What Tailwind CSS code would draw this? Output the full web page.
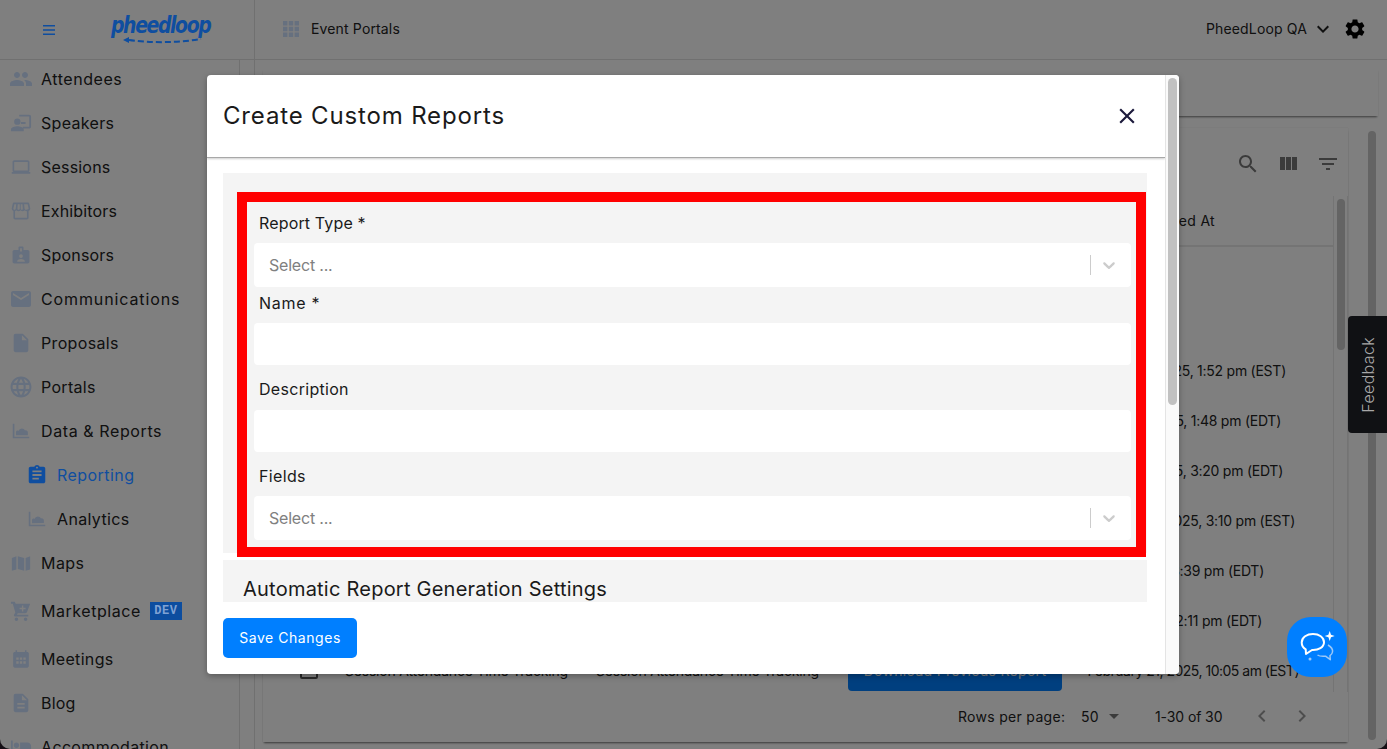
<!DOCTYPE html>
<html>
<head>
<meta charset="utf-8">
<script src="https://cdn.jsdelivr.net/npm/@tailwindcss/browser@4"></script>
<title>Create Custom Reports</title>
</head>
<body class="bg-[#2a1f2a]">
<div class="relative w-[1387px] h-[749px] overflow-hidden font-[Inter,sans-serif] text-[#222] text-[16px] tracking-[0.35px]">
  <div class="w-full h-full bg-white rounded-b-[10px] overflow-hidden flex flex-col">
    <!-- top bar -->
    <header class="h-[60px] flex border-b border-[#e0e0e0] shrink-0">
      <div class="w-[255px] border-r border-[#e0e0e0] flex items-center pl-[37px]">
        <svg class="relative z-10 w-6 h-6 text-[#0f4ea0]" viewBox="0 0 24 24" fill="currentColor"><path d="M6 7h12v1.600H6zM6 11.200h12v1.600H6zM6 15.400h12V17H6z"/></svg>
        <div class="relative z-10 ml-[50px] w-[104px] h-[40px] text-[#0f4ea0]">
          <span class="block w-[122px] scale-x-[0.82] origin-left font-['DejaVu_Sans',sans-serif] italic font-bold text-[23px] leading-[30px] tracking-[-1.7px] whitespace-nowrap">pheedloop</span>
          <svg class="absolute left-[12px] top-[26px] w-[84px] h-[12px]" viewBox="0 0 84 12" fill="none" stroke="currentColor" stroke-width="2"><path d="M6 4c22 3 48 3 72-1" stroke-dasharray="6 3"/><path d="M0 4l6-3v6z" fill="currentColor" stroke="none"/></svg>
        </div>
      </div>
      <div class="flex-1 flex items-center pl-[27px] pr-[20px] pb-[2px] text-[14px] tracking-[0.15px]">
        <svg class="w-[18px] h-[18px] text-[#cde0ff]" viewBox="0 0 18 18" fill="currentColor"><path d="M1 1h4.400v4.400H1zM6.800 1h4.400v4.400H6.800zM12.600 1H17v4.400h-4.400zM1 6.800h4.400v4.400H1zM6.800 6.800h4.400v4.400H6.800zM12.600 6.800H17v4.400h-4.400zM1 12.600h4.400V17H1zM6.800 12.600h4.400V17H6.800zM12.600 12.600H17V17h-4.400z"/></svg>
        <span class="ml-[11px]">Event Portals</span>
        <span class="ml-auto">PheedLoop QA</span>
        <svg class="w-6 h-6 ml-[4px]" viewBox="0 0 24 24" fill="currentColor"><path d="M7.410 8.590 12 13.170l4.590-4.580L18 10l-6 6-6-6z"/></svg>
        <svg class="w-6 h-6 ml-[8px] text-black" viewBox="0 0 24 24" fill="currentColor"><path d="M19.140 12.940c.04-.3.06-.61.06-.94 0-.32-.02-.64-.07-.94l2.030-1.580c.18-.14.23-.41.12-.61l-1.920-3.320c-.12-.22-.37-.29-.59-.22l-2.390.96c-.5-.38-1.030-.7-1.620-.94l-.36-2.540c-.04-.24-.24-.41-.48-.41h-3.840c-.24 0-.43.17-.47.41l-.36 2.540c-.59.24-1.130.57-1.620.94l-2.390-.96c-.22-.08-.47 0-.59.22L2.740 8.870c-.12.21-.08.47.12.61l2.030 1.580c-.05.3-.09.63-.09.94s.02.64.07.94l-2.030 1.580c-.18.14-.23.41-.12.61l1.920 3.320c.12.22.37.29.59.22l2.390-.96c.5.38 1.030.7 1.620.94l.36 2.54c.05.24.24.41.48.41h3.840c.24 0 .44-.17.47-.41l.36-2.54c.59-.24 1.130-.56 1.620-.94l2.390.96c.22.08.47 0 .59-.22l1.920-3.320c.12-.22.07-.47-.12-.61l-2.010-1.580zM12 15.600c-1.980 0-3.600-1.620-3.600-3.600s1.620-3.600 3.600-3.600 3.600 1.620 3.600 3.600-1.620 3.600-3.600 3.600z"/></svg>
      </div>
    </header>
    <div class="flex flex-1 min-h-0">
      <!-- sidebar -->
      <aside class="w-[240px] shrink-0 border-r border-[#e0e0e0] overflow-hidden">
        <div class="-mt-[3px]">
          <div class="h-11 flex items-center pl-[10px] gap-[9px]"><svg class="w-[22px] h-[22px] text-[#cde0ff]" viewBox="1 1 22 22" fill="currentColor"><path d="M16 11c1.660 0 2.990-1.340 2.990-3S17.660 5 16 5c-1.660 0-3 1.340-3 3s1.340 3 3 3zm-8 0c1.660 0 2.990-1.340 2.990-3S9.660 5 8 5C6.340 5 5 6.340 5 8s1.340 3 3 3zm0 2c-2.330 0-7 1.170-7 3.500V19h14v-2.500c0-2.330-4.670-3.500-7-3.500zm8 0c-.29 0-.62.02-.97.05 1.160.84 1.970 1.970 1.970 3.450V19h6v-2.500c0-2.330-4.670-3.500-7-3.500z"/></svg><span class="tracking-[0.55px]">Attendees</span></div>
          <div class="h-11 flex items-center pl-[10px] gap-[9px]"><svg class="w-[22px] h-[22px] text-[#cde0ff]" viewBox="0 0 24 24" fill="currentColor"><path d="M21 3H10v2h11v11h-7v2h7c1.100 0 2-.9 2-2V5c0-1.100-.9-2-2-2zM8 14a3.500 3.500 0 1 0 0-7 3.500 3.500 0 0 0 0 7zm0 1.500c-2.700 0-7 1.300-7 3.500V21h14v-2c0-2.200-4.300-3.500-7-3.500zM12 11h5v2h-5z"/></svg><span class="tracking-[0.33px]">Speakers</span></div>
          <div class="h-11 flex items-center pl-[10px] gap-[9px]"><svg class="w-[22px] h-[22px] text-[#cde0ff]" viewBox="-1 -1 26 26" fill="currentColor"><path d="M20 18c1.100 0 1.990-.9 1.990-2L22 6c0-1.100-.9-2-2-2H4c-1.100 0-2 .9-2 2v10c0 1.100.9 2 2 2H1v2h22v-2h-3zM4 6h16v10H4V6z"/></svg><span class="tracking-[0.2px]">Sessions</span></div>
          <div class="h-11 flex items-center pl-[10px] gap-[9px]"><svg class="w-[22px] h-[22px] text-[#cde0ff]" viewBox="-1 0 26 24" fill="currentColor"><path fill-rule="evenodd" d="M4 2h16c1.100 0 1.600.5 1.800 1.400L23 9c0 1.400-.7 2.400-2 2.900V20c0 1.100-.9 2-2 2H5c-1.100 0-2-.9-2-2v-8.100C1.700 11.400 1 10.400 1 9l1.200-5.600C2.400 2.500 2.900 2 4 2zm.2 2L3 9c0 1 .6 1.500 1.300 1.500S5.600 10 5.800 9l.5-5zm4 0-.4 5c0 .9.600 1.500 1.300 1.500.8 0 1.400-.6 1.400-1.500V4zm3.500 0v5c0 .9.500 1.500 1.300 1.500S14.200 9.900 14.100 9l-.4-5zm4 0 .5 5c.2 1 .8 1.500 1.500 1.500S21 10 21 9l-1.200-5zM5 12.200V20h14v-7.800c-1 0-1.900-.4-2.500-1.100-.7.700-1.500 1.100-2.500 1.100s-1.800-.4-2.500-1.100c-.7.700-1.500 1.100-2.500 1.100s-1.800-.4-2.500-1.100c-.6.700-1.500 1.100-2.500 1.100z"/></svg><span class="tracking-[0.15px]">Exhibitors</span></div>
          <div class="h-11 flex items-center pl-[10px] gap-[9px]"><svg class="w-[22px] h-[22px] text-[#cde0ff]" viewBox="-1 0 26 24" fill="currentColor"><path fill-rule="evenodd" d="M4 6h5V3c0-.6.400-1 1-1h4c.6 0 1 .4 1 1v3h5c1.100 0 2 .9 2 2v12c0 1.100-.9 2-2 2H4c-1.100 0-2-.9-2-2V8c0-1.100.9-2 2-2zm7-2v4h2V4zm1 7a2.200 2.200 0 1 0 0 4.400 2.200 2.200 0 0 0 0-4.400zm-4.500 9h9v-1c0-1.500-3-2.400-4.500-2.400s-4.500.9-4.500 2.400z"/></svg><span class="tracking-[0.2px]">Sponsors</span></div>
          <div class="h-11 flex items-center pl-[10px] gap-[9px]"><svg class="w-[22px] h-[22px] text-[#cde0ff]" viewBox="1 3 22 18" fill="currentColor"><path d="M20 4H4c-1.100 0-1.990.9-1.990 2L2 18c0 1.100.9 2 2 2h16c1.100 0 2-.9 2-2V6c0-1.100-.9-2-2-2zm0 4-8 5-8-5V6l8 5 8-5v2z"/></svg><span class="tracking-[0.88px]">Communications</span></div>
          <div class="h-11 flex items-center pl-[10px] gap-[9px]"><svg class="w-[22px] h-[22px] text-[#cde0ff]" viewBox="0 0 24 24" fill="currentColor"><path d="M6 2c-1.100 0-1.990.9-1.990 2L4 20c0 1.100.89 2 1.990 2H18c1.100 0 2-.9 2-2V8l-6-6H6zm7 7V3.500L18.500 9H13z"/></svg><span>Proposals</span></div>
          <div class="h-11 flex items-center pl-[10px] gap-[9px]"><svg class="w-[22px] h-[22px] text-[#cde0ff]" viewBox="1.500 1.500 21 21" fill="currentColor"><path d="M11.990 2C6.470 2 2 6.480 2 12s4.470 10 9.990 10C17.520 22 22 17.520 22 12S17.520 2 11.990 2zm6.930 6h-2.950c-.32-1.250-.78-2.450-1.380-3.560 1.840.63 3.370 1.910 4.330 3.560zM12 4.040c.83 1.200 1.480 2.530 1.910 3.960h-3.820c.43-1.430 1.080-2.760 1.910-3.960zM4.260 14C4.100 13.360 4 12.690 4 12s.1-1.360.26-2h3.380c-.08.66-.14 1.320-.14 2s.06 1.340.14 2H4.260zm.82 2h2.950c.32 1.250.78 2.450 1.380 3.560-1.840-.63-3.370-1.900-4.330-3.560zm2.950-8H5.080c.96-1.660 2.490-2.930 4.330-3.560C8.810 5.550 8.350 6.750 8.030 8zM12 19.960c-.83-1.200-1.480-2.530-1.910-3.960h3.820c-.43 1.430-1.080 2.760-1.910 3.960zM14.340 14H9.660c-.09-.66-.16-1.320-.16-2s.07-1.350.16-2h4.680c.09.65.16 1.320.16 2s-.07 1.340-.16 2zm.25 5.560c.6-1.110 1.060-2.310 1.380-3.560h2.950c-.96 1.650-2.490 2.930-4.330 3.560zM16.360 14c.08-.66.14-1.320.14-2s-.06-1.340-.14-2h3.380c.16.64.26 1.310.26 2s-.1 1.360-.26 2h-3.380z"/></svg><span class="tracking-[0.3px]">Portals</span></div>
          <div class="h-11 flex items-center pl-[10px] gap-[9px]"><svg class="w-[22px] h-[22px] text-[#cde0ff]" viewBox="0 0 24 24" fill="currentColor"><path d="M3 4h1.800v14.200H21V20H3zM6.500 16.500v-3.300c0-1 .8-1.700 1.700-1.700.4 0 .8.100 1.100.400.5-1.600 2-2.700 3.700-2.700 1.500 0 2.800.9 3.400 2.200.3-.1.600-.1.800-.1 1.400 0 2.300 1.100 2.300 2.400v2.800z"/></svg><span class="tracking-[0.6px]">Data &amp; Reports</span></div>
          <div class="h-11 flex items-center pl-[26px] gap-[9px]"><svg class="relative z-10 w-[22px] h-[22px] text-[#0f4ea0]" viewBox="0 0 24 24" fill="currentColor"><path d="M19 3h-4.180C14.400 1.840 13.300 1 12 1c-1.300 0-2.400.84-2.820 2H5c-1.100 0-2 .9-2 2v14c0 1.100.9 2 2 2h14c1.100 0 2-.9 2-2V5c0-1.100-.9-2-2-2zm-7 0c.55 0 1 .45 1 1s-.45 1-1 1-1-.45-1-1 .45-1 1-1zm2 14H7v-2h7v2zm3-4H7v-2h10v2zm0-4H7V7h10v2z"/></svg><span class="relative z-10 text-[#0f4ea0] tracking-[0.45px]">Reporting</span></div>
          <div class="h-11 flex items-center pl-[26px] gap-[9px]"><svg class="w-[22px] h-[22px] text-[#cde0ff]" viewBox="0 0 24 24" fill="currentColor"><path d="M3 4h1.800v14.200H21V20H3zM6.500 16.500v-3.300c0-1 .8-1.700 1.700-1.700.4 0 .8.100 1.100.400.5-1.600 2-2.700 3.700-2.700 1.500 0 2.800.9 3.400 2.200.3-.1.600-.1.800-.1 1.400 0 2.300 1.100 2.300 2.400v2.800z"/></svg><span>Analytics</span></div>
          <div class="h-11 flex items-center pl-[10px] gap-[9px]"><svg class="w-[22px] h-[22px] text-[#cde0ff]" viewBox="0 0 24 24" fill="currentColor"><path d="M2 6.500 7 4.500v14.500l-5 1.500zM8.500 4.500l7 2v14l-7-2zM17 6.500l5-2V19l-5 1.500z"/></svg><span class="tracking-[0.45px]">Maps</span></div>
          <div class="h-[52px] flex items-center pl-[10px] gap-[9px]"><svg class="w-[22px] h-[22px] text-[#cde0ff]" viewBox="0 0 24 24" fill="currentColor"><path fill-rule="evenodd" d="M1 2h4.300l.9 2H22l-3.400 9.200c-.3.800-1 1.300-1.800 1.300H8.500L7.600 16H20v2H5.500c-1 0-1.600-1.100-1.100-1.900L5.800 13.600 3 4H1zM13 6v2.500h-2.500V10H13v2.500h1.500V10H17V8.500h-2.500V6zM7 19a2 2 0 1 1 0 4 2 2 0 0 1 0-4zm10 0a2 2 0 1 1 0 4 2 2 0 0 1 0-4z"/></svg><span class="tracking-[0.55px]">Marketplace</span><span class="relative z-10 w-[32px] h-[18px] bg-[#0c4d9f] text-[#7fa2d4] font-['Liberation_Mono',monospace] font-bold text-[12px] leading-[18px] text-center tracking-[0.5px]">DEV</span></div>
          <div class="h-11 flex items-center pl-[10px] gap-[9px]"><svg class="w-[22px] h-[22px] text-[#cde0ff]" viewBox="-2 -1 28 26" fill="currentColor"><path fill-rule="evenodd" d="M20 3h-1V1h-2v2H7V1H5v2H4c-1.100 0-2 .9-2 2v16c0 1.100.9 2 2 2h16c1.100 0 2-.9 2-2V5c0-1.100-.9-2-2-2zM6 10h3v3H6zm4.500 0h3v3h-3zm4.500 0h3v3h-3zM6 15h3v3H6zm4.500 0h3v3h-3zm4.500 0h3v3h-3z"/></svg><span class="tracking-[0.33px]">Meetings</span></div>
          <div class="h-11 flex items-center pl-[10px] gap-[9px]"><svg class="w-[22px] h-[22px] text-[#cde0ff]" viewBox="0 0 24 24" fill="currentColor"><path d="M14 2H6c-1.100 0-1.990.9-1.990 2L4 20c0 1.100.89 2 1.990 2H18c1.100 0 2-.9 2-2V8l-6-6zm2 16H8v-2h8v2zm0-4H8v-2h8v2zm-3-5V3.500L18.500 9H13z"/></svg><span class="tracking-[0.2px]">Blog</span></div>
          <div class="h-11 flex items-center pl-[10px] gap-[9px]"><svg class="w-[22px] h-[22px] text-[#cde0ff]" viewBox="0 0 24 24" fill="currentColor"><path d="M7 13c1.660 0 3-1.340 3-3S8.660 7 7 7s-3 1.340-3 3 1.340 3 3 3zm12-6h-8v7H3V5H1v15h2v-3h18v3h2v-9c0-2.210-1.790-4-4-4z"/></svg><span>Accommodation</span></div>
        </div>
      </aside>
      <div class="w-[15px] shrink-0 border-r border-[#e0e0e0]"></div>
      <!-- page behind dialog -->
      <main class="flex-1 min-w-0 pl-2 pt-2">
        <div class="w-[1115px] h-[48px] bg-white shadow-[0_2px_2px_-1px_rgba(0,0,0,.55)]"></div>
        <div class="flex mt-3 h-[614px]">
          <section class="w-[1085px] h-full shadow-[0_2px_2px_-1px_rgba(0,0,0,.55),0_0_1px_rgba(0,0,0,.15)] flex flex-col text-[14px] tracking-[0.3px]">
            <div class="h-[68px] shrink-0 flex items-center justify-end pt-[3px] pr-[8px] gap-[16px] text-[#767676]">
              <svg class="w-6 h-6" viewBox="0 0 24 24" fill="currentColor"><path d="M15.500 14h-.79l-.28-.27C15.410 12.590 16 11.110 16 9.500 16 5.910 13.090 3 9.500 3S3 5.910 3 9.500 5.910 16 9.500 16c1.610 0 3.090-.59 4.230-1.570l.27.28v.79l5 4.990L20.490 19l-4.990-5zm-6 0C7.010 14 5 11.990 5 9.500S7.010 5 9.500 5 14 7.010 14 9.500 11.990 14 9.500 14z"/></svg>
              <svg class="w-6 h-6" viewBox="0 0 24 24" fill="currentColor"><path d="M10 18h5V5h-5v13zm-6 0h5V5H4v13zM16 5v13h5V5h-5z"/></svg>
              <svg class="w-6 h-6" viewBox="0 0 24 24" fill="currentColor"><path d="M10 18h4v-2h-4v2zM3 6v2h18V6H3zm3 7h12v-2H6v2z"/></svg>
            </div>
            <div class="flex h-[496px] shrink-0">
              <div class="flex-1 min-w-0">
                <div class="h-[51px] flex items-center justify-end pr-[118px] border-b-2 border-[#e8e8e8]">Updated At</div>
                <div class="pt-[98px] tracking-[-0.25px]">
                  <div class="h-[50px] flex items-center justify-end pr-[47px]">January 27, 2025, 1:52 pm (EST)</div>
                  <div class="h-[50px] flex items-center justify-end pr-[52px]">March 14, 2025, 1:48 pm (EDT)</div>
                  <div class="h-[50px] flex items-center justify-end pr-[50px]">March 14, 2025, 3:20 pm (EDT)</div>
                  <div class="h-[50px] flex items-center justify-end pr-[38px]">February 4, 2025, 3:10 pm (EST)</div>
                  <div class="h-[50px] flex items-center justify-end pr-[69px]">March 20, 2025, 3:39 pm (EDT)</div>
                  <div class="h-[50px] flex items-center justify-end pr-[71px]">March 20, 2025, 2:11 pm (EDT)</div>
                  <div class="h-[50px] flex items-center pl-[37px] pr-[34px]">
                    <span class="w-[18px] h-[18px] border-2 border-[#555] rounded-[2px] shrink-0"></span>
                    <span class="ml-[27px] w-[251px] whitespace-nowrap overflow-hidden tracking-[-0.2px]">Session Attendance Time Tracking</span>
                    <span class="w-[252px] whitespace-nowrap overflow-hidden tracking-[-0.2px]">Session Attendance Time Tracking</span>
                    <span class="w-[214px] h-[42px] rounded-[4px] bg-[#007fff] text-white flex items-center justify-center tracking-[0.3px]">Download Previous Report</span>
                    <span class="ml-auto whitespace-nowrap tracking-[-0.5px]">February 21, 2025, 10:05 am (EST)</span>
                  </div>
                </div>
              </div>
              <div class="w-[15px] shrink-0 border-x border-[#e8e8e8] pl-[3px] pt-[3px]"><div class="w-2 h-[151px] rounded-full bg-[#c8c8c8]"></div></div>
            </div>
            <div class="flex-1 flex items-center pl-[695px] pb-[2px]">
              <span class="w-[123px]">Rows per page:</span>
              <span class="w-[22px]">50</span>
              <svg class="w-6 h-6 -ml-[1px] text-[#767676]" viewBox="0 0 24 24" fill="currentColor"><path d="m7 10 5 5 5-5z"/></svg>
              <span class="ml-[29px] w-[80px] whitespace-nowrap tracking-[-0.1px]">1-30 of 30</span>
              <svg class="w-6 h-6 ml-[15px] text-[#9a9a9a]" viewBox="0 0 24 24" fill="currentColor"><path d="M15.410 7.410 14 6l-6 6 6 6 1.410-1.410L10.830 12z"/></svg>
              <svg class="w-6 h-6 ml-[16px] text-[#9a9a9a]" viewBox="0 0 24 24" fill="currentColor"><path d="M10 6 8.590 7.410 13.170 12l-4.580 4.590L10 18l6-6z"/></svg>
            </div>
          </section>
          <div class="ml-[20px] mt-[3px] w-2 h-[609px] rounded-full bg-[#c8c8c8]"></div>
        </div>
      </main>
    </div>
  </div>

  <!-- backdrop -->
  <div class="absolute inset-0 bg-black/50"></div>

  <!-- dialog -->
  <div class="absolute z-20 left-[207px] top-[75px] w-[972px] h-[599px] bg-white rounded-[4px] overflow-hidden flex shadow-[0_2px_6px_rgba(0,0,0,.3)]">
    <div class="w-[958px] flex flex-col">
      <div class="h-[83px] shrink-0 flex items-center justify-between pl-[16px] pr-[25px] border-b border-[#a8a8a8] shadow-[0_1px_2px_rgba(0,0,0,.2)]">
        <h2 class="text-[24px] text-[#1a1a1a] tracking-[0.84px]">Create Custom Reports</h2>
        <svg class="w-[26px] h-[26px] text-[#1c1a3c]" viewBox="0 0 24 24" fill="currentColor"><path d="M19 6.410 17.590 5 12 10.590 6.410 5 5 6.410 10.590 12 5 17.590 6.410 19 12 13.410 17.590 19 19 17.590 13.410 12z"/></svg>
      </div>
      <div class="flex-1 min-h-0 overflow-hidden pt-[15px] pl-[16px] pr-[18px]">
        <div class="relative h-[380px] bg-[#f4f4f4] pl-[31px] pr-[16px] text-[#1a1a1a]">
          <div class="h-[70px] pt-[39px] pl-[5px] leading-[22px] tracking-[0.15px]">Report Type *</div>
          <div class="h-11 bg-white rounded-[4px] flex items-center pl-[15px] pr-[8px] text-[#808080]"><span class="tracking-[-0.2px]">Select ...</span><span class="ml-auto w-px h-5 bg-[#ccc]"></span><svg class="w-[20px] h-[20px] ml-[8px] mr-[4px] text-[#ccc]" viewBox="0 0 20 20" fill="currentColor"><path d="M4.516 7.548c.436-.446 1.043-.481 1.576 0L10 11.295l3.908-3.747c.533-.481 1.141-.446 1.574 0 .436.445.408 1.197 0 1.615-.406.418-4.695 4.502-4.695 4.502a1.095 1.095 0 0 1-1.576 0S4.924 9.581 4.516 9.163c-.409-.418-.436-1.170 0-1.615z"/></svg></div>
          <div class="h-9 pl-[5px] pt-[5px] leading-[22px] tracking-[0.7px]">Name *</div>
          <div class="h-[42px] bg-white rounded-[4px]"></div>
          <div class="h-[45px] pl-[5px] pt-[13px] leading-[22px] tracking-[0.3px]">Description</div>
          <div class="h-[42px] bg-white rounded-[4px]"></div>
          <div class="h-[44px] pl-[5px] pt-[13px] leading-[22px]">Fields</div>
          <div class="h-11 bg-white rounded-[4px] flex items-center pl-[15px] pr-[8px] text-[#808080]"><span class="tracking-[-0.2px]">Select ...</span><span class="ml-auto w-px h-5 bg-[#ccc]"></span><svg class="w-[20px] h-[20px] ml-[8px] mr-[4px] text-[#ccc]" viewBox="0 0 20 20" fill="currentColor"><path d="M4.516 7.548c.436-.446 1.043-.481 1.576 0L10 11.295l3.908-3.747c.533-.481 1.141-.446 1.574 0 .436.445.408 1.197 0 1.615-.406.418-4.695 4.502-4.695 4.502a1.095 1.095 0 0 1-1.576 0S4.924 9.581 4.516 9.163c-.409-.418-.436-1.170 0-1.615z"/></svg></div>
          <!-- annotation frame -->
          <div class="absolute left-[14px] top-[19px] w-[909px] h-[365px] border-[10px] border-[#ff0000]"></div>
        </div>
        <div class="mt-[7px] h-[42px] bg-[#f4f4f4] pl-[20px] pt-[16px] text-[20px] leading-[26px] text-[#1a1a1a] tracking-[0.23px]">Automatic Report Generation Settings</div>
      </div>
      <div class="h-[72px] shrink-0 pl-[16px] pt-[16px]">
        <button class="w-[134px] h-10 pb-[2px] rounded-[5px] bg-[#007fff] text-white text-[14px] tracking-[0.55px]">Save Changes</button>
      </div>
    </div>
    <div class="w-[14px] bg-[#fafafa] border-l border-[#e4e4e4] pl-[2px] pt-[3px]"><div class="w-[9px] h-[327px] rounded-full bg-[#c1c1c1]"></div></div>
  </div>

  <!-- feedback tab -->
  <div class="absolute z-20 left-[1348px] top-[316px] w-[39px] h-[117px] bg-[#101114] rounded-l-[4px] flex items-center justify-center">
    <span class="[writing-mode:vertical-rl] rotate-180 text-[#a8a8a8] text-[16px] font-light">Feedback</span>
  </div>

  <!-- chat bubble -->
  <div class="absolute z-20 left-[1287px] top-[617px] w-[60px] h-[60px] rounded-[24px] bg-[#007fff]">
    <svg class="w-[60px] h-[60px]" viewBox="0 0 60 60" fill="none">
      <path d="M41 28c3.500 2 5 4 4.500 7-.3 1.600-1.500 3-2.500 3.700l.3 4-4.800-3.500c-3 .3-6 .2-8-1.200" stroke="#9cc8f7" stroke-width="1.500" stroke-linejoin="round"/>
      <path d="M26 17c-6 0-11.300 3.200-11.300 8.500 0 3.200 1.800 5.500 4 6.800l.3 4.700 6-4c6.500.3 12-2.500 12-7.700S32 17 26 17z" stroke="#fff" stroke-width="2" stroke-linejoin="round"/>
      <path d="M42.700 14l1.300 3.700 3.700 1.300-3.700 1.300-1.300 3.700-1.300-3.700-3.700-1.300 3.700-1.300z" fill="#fff"/>
      <circle cx="23" cy="42" r="1.500" fill="#9cc8f7"/>
    </svg>
  </div>
</div>
</body>
</html>
